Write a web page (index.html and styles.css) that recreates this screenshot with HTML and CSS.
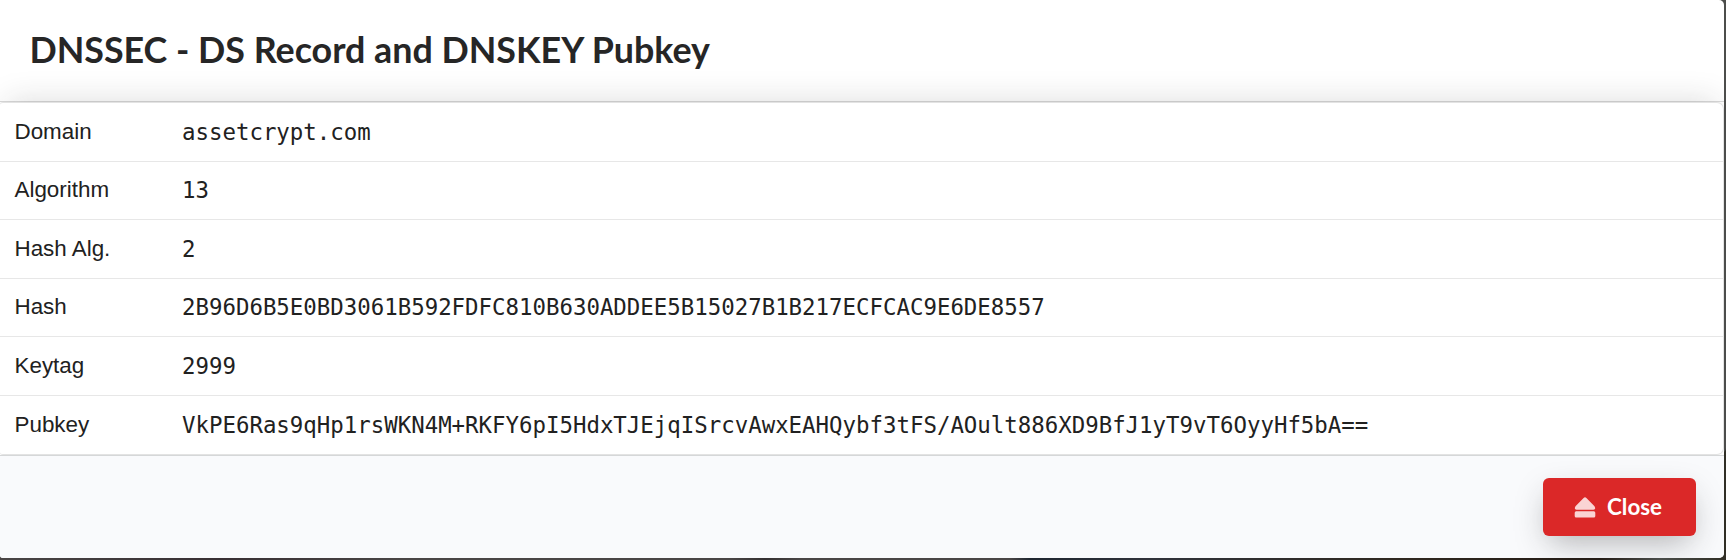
FILE: index.html
```html
<!DOCTYPE html>
<html lang="en">
<head>
<meta charset="utf-8">
<title>DNSSEC</title>
<link rel="stylesheet" href="styles.css">
</head>
<body>
<div class="modal">
  <header class="header"><h1 class="title">DNSSEC - DS Record and DNSKEY Pubkey</h1></header>
  <dl class="records">
    <div class="row"><dt class="label">Domain</dt><dd class="value">assetcrypt.com</dd></div>
    <div class="row"><dt class="label">Algorithm</dt><dd class="value">13</dd></div>
    <div class="row"><dt class="label">Hash Alg.</dt><dd class="value">2</dd></div>
    <div class="row"><dt class="label">Hash</dt><dd class="value">2B96D6B5E0BD3061B592FDFC810B630ADDEE5B15027B1B217ECFCAC9E6DE8557</dd></div>
    <div class="row"><dt class="label">Keytag</dt><dd class="value">2999</dd></div>
    <div class="row"><dt class="label">Pubkey</dt><dd class="value">VkPE6Ras9qHp1rsWKN4M+RKFY6pI5HdxTJEjqISrcvAwxEAHQybf3tFS/AOult886XD9BfJ1yT9vT6OyyHf5bA==</dd></div>
  </dl>
  <footer class="actions">
    <button class="close" type="button">
      <svg class="icon" viewBox="0 0 22 21"><path d="M9.6 1.1Q11 -.4 12.4 1.1L20.5 9.2Q22.3 12.5 19.5 12.7H2.500Q-.3 12.500 1.500 9.200Z"/><rect x=".7" y="14.200" width="20.600" height="6.300" rx="1.500"/></svg>
      <span>Close</span>
    </button>
  </footer>
</div>
</body>
</html>
```
FILE: styles.css
```css
* { box-sizing: border-box; }
body {
  margin: 0;
  height: 560px;
  overflow: hidden;
  background: linear-gradient(90deg, #494545 0, #382f33 220px, #494545 400px, #494545 730px, #343031 765px, #494545 800px, #494545 1010px, #1f2630 1030px, #30323a 1150px, #302820 1400px, #241c16 1600px, #4a4d4a 1660px, #302e25 1726px);
}
.modal {
  width: 1724px;
  height: 558px;
  overflow: hidden;
  border-radius: 0 5px 5px 3px;
  background: #fff;
  box-shadow: 2px -105px 0 #4c4d4b;
}
.header {
  height: 102px;
  padding: 22px 29.400px 0;
  border-bottom: 1px solid #d9d9d9;
}
.title {
  margin: 0;
  font: 700 35.84px/56px Lato, sans-serif;
  color: #262626;
}
.records {
  display: grid;
  grid-template-rows: 59px 58px 59px 58px 59px 58px;
  position: relative;
  height: 353px;
  margin: 0;
  border: 1px solid #e3e3e3;
  border-left: 0;
  border-radius: 3px 7px 7px 3px;
  background: #fff;
  box-shadow: 0 -8px 30px -8px rgba(34, 36, 38, .17);
}
.row {
  display: flex;
  align-items: center;
  border-bottom: 1px solid #e7e7e7;
}
.row:nth-child(even) { padding-bottom: 1px; }
.row:last-child {
  padding-bottom: 0;
  border-bottom: 0;
}
.label {
  width: 182px;
  padding-left: 14.5px;
  font: 22.4px/32px "Liberation Sans", sans-serif;
  color: #212121;
}
.value {
  margin: 0;
  font: 22.4px/32px "DejaVu Sans Mono", monospace;
  color: #212121;
}
.actions {
  position: relative;
  display: flex;
  justify-content: flex-end;
  height: 103px;
  padding: 22px 28px 0 0;
  border-top: 1px solid #d5d7d8;
  background: #f9fafc;
}
.close {
  display: flex;
  align-items: center;
  gap: 11px;
  width: 153px;
  height: 58px;
  padding: 0 0 0 31px;
  border: 0;
  border-radius: 6px;
  background: #db2828;
  color: #fff;
  font: 700 22.4px/28px Lato, sans-serif;
  box-shadow: 0 12px 32px -6px rgba(34, 36, 38, .34);
}
.icon {
  width: 22px;
  height: 21px;
  fill: #fad4d4;
}
```
